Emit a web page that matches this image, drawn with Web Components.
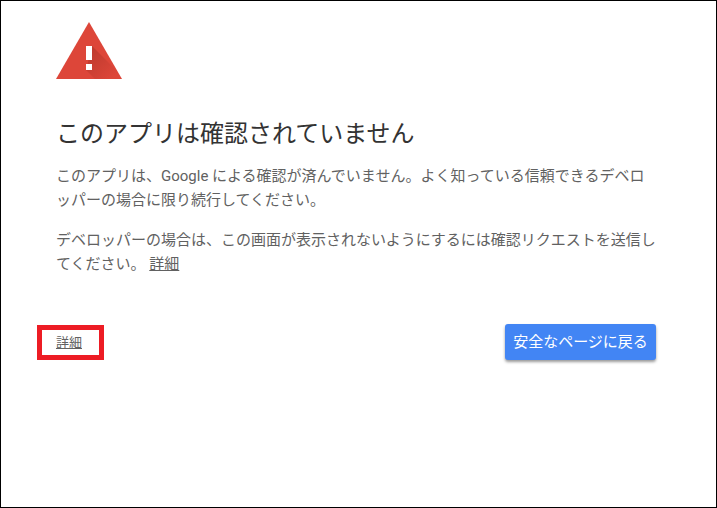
<!DOCTYPE html>
<html lang="ja"><head><meta charset="utf-8"><title>このアプリは確認されていません</title>
<style>html,body{margin:0;padding:0;background:#fff}</style></head>
<body>
<warn-frame>
  <warn-icon></warn-icon>
  <warn-title>このアプリは確認されていません</warn-title>
  <warn-para>このアプリは、Google による確認が済んでいません。よく知っている信頼できるデベロッパーの場合に限り続行してください。</warn-para>
  <warn-para>デベロッパーの場合は、この画面が表示されないようにするには確認リクエストを送信してください。 <u>詳細</u></warn-para>
  <warn-actions>
    <warn-link slot="start">詳細</warn-link>
    <warn-button slot="end">安全なページに戻る</warn-button>
  </warn-actions>
</warn-frame>
<script>
const F='"Roboto","Noto Sans CJK JP",sans-serif';
function def(name,html){customElements.define(name,class extends HTMLElement{constructor(){super();this.attachShadow({mode:'open'}).innerHTML=html}})}
def('warn-frame',`<style>:host{display:block;box-sizing:border-box;width:717px;height:508px;border:1px solid #000;background:#fff;padding:21px 60px 0 55px;font-family:${F}}</style><slot></slot>`);
def('warn-icon',`<style>:host{display:block;width:66px;height:58px}svg{display:block}</style>
<svg width="66" height="58" viewBox="0 0 66 58"><defs><clipPath id="t"><path d="M33 0 L66 57 H0 Z"/></clipPath><linearGradient id="s" x1="33" y1="33" x2="56" y2="56" gradientUnits="userSpaceOnUse"><stop offset="0" stop-color="#A93226" stop-opacity=".55"/><stop offset="1" stop-color="#A93226" stop-opacity="0"/></linearGradient></defs><path d="M33 0 L66 57 H0 Z" fill="#DD4639"/><g clip-path="url(#t)"><path d="M36 24 L69 57 H39 L30 48 Z" fill="url(#s)"/></g><rect x="30" y="24" width="6" height="14" fill="#fff"/><rect x="30" y="42" width="6" height="6" fill="#fff"/></svg>`);
def('warn-title',`<style>:host{display:block;margin-top:38px;font-size:24px;line-height:32px;font-weight:400;color:#333}</style><slot></slot>`);
def('warn-para',`<style>:host{display:block;font-size:15px;line-height:24px;color:#616161;margin-top:16px}:host(:first-of-type){margin-top:14px}::slotted(u){color:#616161}</style><slot></slot>`);
def('warn-actions',`<style>:host{display:flex;justify-content:space-between;align-items:flex-start;margin-top:48px;margin-left:-19px}</style><slot name="start"></slot><slot name="end"></slot>`);
def('warn-link',`<style>:host{display:block;box-sizing:border-box;width:67px;height:35px;border:5px solid #ED1C24;padding-right:3px;margin-top:1px;font-size:13px;line-height:25px;color:#616161;text-align:center;text-decoration:underline;background:#fff}</style><slot></slot>`);
def('warn-button',`<style>:host{display:block;box-sizing:border-box;width:151px;height:36px;background:#4285F4;color:#fff;border-radius:3px;font-size:15px;line-height:36px;text-align:center;box-shadow:0 2px 3px rgba(0,0,0,.4)}</style><slot></slot>`);
</script>
</body></html>
